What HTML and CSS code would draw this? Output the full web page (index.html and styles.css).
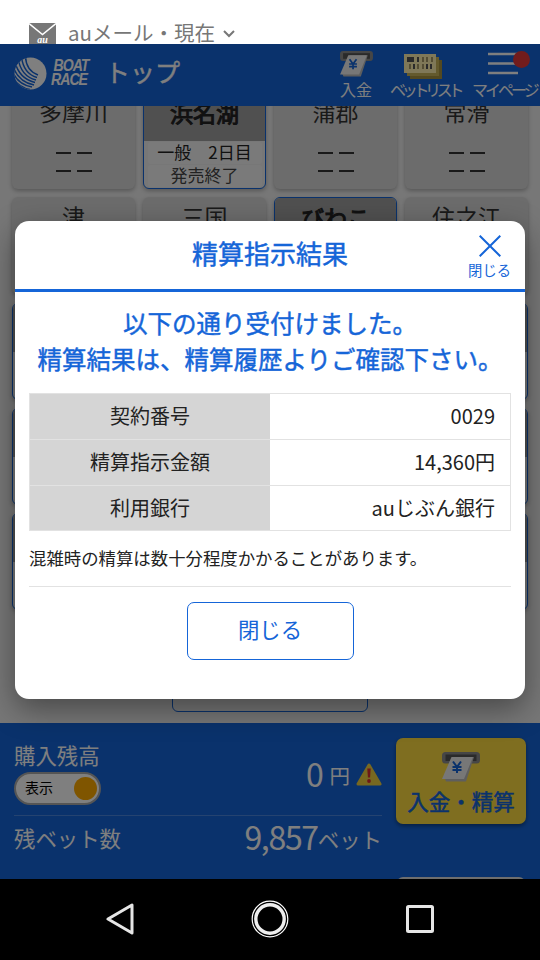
FILE: index.html
```html
<!DOCTYPE html>
<html lang="ja">
<head>
<meta charset="utf-8">
<title>精算指示結果</title>
<link rel="stylesheet" href="styles.css">
</head>
<body>
<svg class="defs" width="0" height="0" aria-hidden="true">
  <symbol id="atm" viewBox="0 0 38 30">
    <rect x="0" y="0" width="38" height="11.500" rx="3.500" fill="#8c8c8c"/>
    <rect x="3.500" y="2.500" width="31" height="6.500" fill="#555"/>
    <path d="M11 5H32L24 29.500H4L3 27Z" fill="#bdbdbd"/>
    <path d="M9.500 5H31L22 27H0Z" fill="#eee"/>
    <path d="M11 9.500L15 15L19 9.500M15 15V21M10.500 15H19.500M10.500 18H19.500" fill="none" stroke="#1565d8" stroke-width="2"/>
  </symbol>
</svg>
<div class="status">
  <svg class="mail" width="27" height="21" viewBox="0 0 27 21">
    <path d="M0 0H27V21H0Z" fill="#777"/>
    <path d="M0 .500L13.500 11.500L27 .500" fill="none" stroke="#fff" stroke-width="1.500"/>
    <text x="13.500" y="19.500" text-anchor="middle" class="mail-au">au</text>
  </svg>
  <span>auメール・現在</span>
  <svg class="chev" width="12" height="8" viewBox="0 0 12 8"><path d="M1 1L6 6L11 1" fill="none" stroke="#777" stroke-width="2"/></svg>
</div>
<div class="app">
  <header class="header">
    <div class="brand">
      <svg width="33" height="33" viewBox="0 0 33 33">
        <defs><clipPath id="disc"><circle cx="16.500" cy="16.500" r="16"/></clipPath></defs>
        <g clip-path="url(#disc)">
          <path d="M0 0H33V33H0Z" fill="#fff"/>
          <g fill="none" stroke="#1565d8" stroke-width="1.500">
            <path d="M11.500 0C12 9 16 15 24 18"/>
            <path d="M7.500 0C9 12 14 18 23 20.500"/>
            <path d="M4 1C6 14 12 20.500 22 23"/>
            <path d="M1 5C4 17 11 23 21 25.500"/>
            <path d="M-1 10C3 20 10 26 20 28"/>
            <path d="M-1 16C3 24 9 28.500 18 30"/>
            <path d="M-1 21C3 27 8 31 16 32.500"/>
          </g>
        </g>
      </svg>
      <span class="brand-name"><span>BOAT</span><span>RACE</span></span>
    </div>
    <h1 class="page-title">トップ</h1>
    <nav class="tools">
      <a class="tool tool-pay"><svg width="33" height="26"><use href="#atm"/></svg><span>入金</span></a>
      <a class="tool tool-bets">
        <svg width="38" height="26" viewBox="0 0 38 26">
          <path d="M6 6H38V25H6Z" fill="#a69340"/><path d="M3 3H35V22H3Z" fill="#c9b45a"/><path d="M0 0H32V19H0Z" fill="#fff0b0"/>
          <path d="M3 3H10V8H3ZM13 3H15V8H13ZM9 10H11V15H9ZM22 10H24V15H22ZM26 10H28V15H26Z" fill="#555"/>
          <path d="M18 3H20V8H18ZM22 3H24V8H22ZM27 3H29V8H27ZM5 10H7V15H5ZM13 10H15V15H13ZM18 10H20V15H18Z" fill="#a89a68"/>
        </svg><span>ベットリスト</span></a>
      <a class="tool tool-my">
        <svg width="42" height="26" viewBox="0 0 42 26">
          <path d="M0 3H30M0 12.500H30M0 22H30" stroke="#fff" stroke-width="2.300"/><circle cx="33.500" cy="8.500" r="8.500" fill="#e43838"/>
        </svg><span>マイページ</span></a>
    </nav>
  </header>
  <main class="races">
    <div class="grid">
      <div class="card"><b>多摩川</b><i></i><i></i></div>
      <div class="card open"><b>浜名湖</b><span class="day">一般　2日目</span><span class="day end">発売終了</span></div>
      <div class="card"><b>蒲郡</b><i></i><i></i></div>
      <div class="card"><b>常滑</b><i></i><i></i></div>
      <div class="card"><b>津</b></div>
      <div class="card"><b>三国</b></div>
      <div class="card open"><b>びわこ</b></div>
      <div class="card"><b>住之江</b></div>
      <div class="card open"><b></b></div><div class="card"></div><div class="card"></div><div class="card open"><b></b></div>
      <div class="card open"><b></b></div><div class="card"></div><div class="card"></div><div class="card open"><b></b></div>
      <div class="card open"><b></b></div><div class="card"></div><div class="card"></div><div class="card open"><b></b></div>
    </div>
    <div class="more"></div>
  </main>
  <section class="wallet">
    <div class="balances">
      <div class="balance">
        <div><div class="label">購入残高</div><div class="switch"><span>表示</span><em></em></div></div>
        <div class="amount"><span class="num">0</span><span class="yen">円</span>
          <svg width="26" height="23" viewBox="0 0 26 23"><path d="M13 2L24 21H2Z" fill="#f0d040" stroke="#f0d040" stroke-width="3" stroke-linejoin="round"/><path d="M11.300 5.500H14.700L14.100 14.500H11.900Z" fill="#d83030"/><circle cx="13" cy="18" r="1.900" fill="#d83030"/></svg>
        </div>
      </div>
      <div class="bets"><span class="label">残ベット数</span><span class="amount"><span class="num">9,857</span><span class="unit">ベット</span></span></div>
    </div>
    <div class="actions">
      <div class="deposit"><svg width="38" height="30"><use href="#atm"/></svg><span>入金・精算</span></div>
      <div class="next"></div>
    </div>
  </section>
  <div class="overlay">
    <div class="modal">
      <div class="modal-head">
        <h2>精算指示結果</h2>
        <div class="close"><svg width="22" height="22" viewBox="0 0 22 22"><path d="M.700 .700L21.300 21.300M21.300 .700L.700 21.300" stroke="#1565d8" stroke-width="2"/></svg><span>閉じる</span></div>
      </div>
      <p class="message">以下の通り受付けました。<br>精算結果は、精算履歴よりご確認下さい。</p>
      <dl class="result">
        <dt>契約番号</dt><dd>0029</dd>
        <dt>精算指示金額</dt><dd>14,360円</dd>
        <dt>利用銀行</dt><dd>auじぶん銀行</dd>
      </dl>
      <p class="note">混雑時の精算は数十分程度かかることがあります。</p>
      <div class="foot"><button class="btn">閉じる</button></div>
    </div>
  </div>
</div>
<div class="navbar">
  <svg width="28" height="34" viewBox="0 0 28 34"><path d="M2 17L26 3V31Z" fill="none" stroke="#e6e6e6" stroke-width="3" stroke-linejoin="round"/></svg>
  <svg width="38" height="38" viewBox="0 0 38 38"><circle cx="19" cy="19" r="17.800" fill="none" stroke="#fff" stroke-width="1.200"/><circle cx="19" cy="19" r="14.200" fill="none" stroke="#eee" stroke-width="3.400"/></svg>
  <svg width="28" height="28" viewBox="0 0 28 28"><rect x="1.500" y="1.500" width="25" height="25" rx="1" fill="none" stroke="#e6e6e6" stroke-width="3"/></svg>
</div>
</body>
</html>
```
FILE: styles.css
```css
* { box-sizing: border-box; margin: 0; padding: 0; }
body {
  width: 540px; height: 960px; overflow: hidden;
  display: flex; flex-direction: column;
  background: #fff; color: #222;
  font-family: "Noto Sans CJK JP", sans-serif;
}
svg { display: block; flex: none; }
.defs { position: absolute; }

.status { height: 44px; flex: none; display: flex; align-items: flex-end; padding-left: 29px; color: #777; font-size: 20.500px; line-height: 23px; white-space: nowrap; }
.mail { margin-right: 12px; }
.mail-au { font: italic bold 10px "Liberation Serif", serif; fill: #fff; }
.chev { margin: 0 0 6px 8px; }

.app { height: 835px; flex: none; position: relative; overflow: hidden; display: flex; flex-direction: column; background: #eee; }
.header { height: 62px; flex: none; display: flex; background: #1565d8; color: #fff; padding-left: 14px; }
.brand { display: flex; gap: 4px; padding-top: 13px; width: 91px; }
.brand-name { display: flex; flex-direction: column; font: italic bold 17px/14px "Liberation Sans", sans-serif; letter-spacing: -1.200px; padding-top: 2px; transform: scaleX(.83); transform-origin: left; }
.brand-name span:first-child { padding-left: 3px; }
.page-title { font-size: 25px; font-weight: 400; line-height: 30px; padding-top: 12px; width: 235px; -webkit-text-stroke: .400px #fff; }
.tools { display: flex; }
.tool { display: flex; flex-direction: column; font-size: 16px; line-height: 20px; white-space: nowrap; padding-top: 7px; }
.tool svg { margin-bottom: 2px; }
.tool-pay { width: 50px; }
.tool-bets { width: 82px; letter-spacing: -4.300px; }
.tool-bets svg { margin: 3px 0 -1px 14px; }
.tool-my { width: 68px; letter-spacing: -3px; }
.tool-my svg { margin-left: 16px; }

.races { height: 617px; flex: none; padding: 0 12px; overflow: hidden; }
.grid { display: grid; grid-template-columns: repeat(4, 123px); grid-auto-rows: 97px; gap: 8.300px 8px; margin-top: -14px; }
.card { border-radius: 6px; background: #d9d9d9; box-shadow: 0 2px 4px #0004; display: flex; flex-direction: column; align-items: center; overflow: hidden; color: #333; }
.card b { font-size: 23px; line-height: 38px; height: 53px; font-weight: 400; }
.card i { width: 36px; height: 2px; margin-bottom: 16px; background: linear-gradient(90deg, #333 15px, transparent 15px 21px, #333 21px); }
.card i:first-of-type { margin-top: 7px; }
.card.open { border: 1.500px solid #1565d8; background: #eee; color: #222; }
.card.open b { width: 100%; flex: none; height: 48px; background: #a0a0a0; text-align: center; line-height: 38px; -webkit-text-stroke: 1px #222; }
.day { width: 114px; height: 22px; flex: none; margin-top: 1px; border-radius: 3px; background: #f5f5f5; text-align: center; font-size: 17px; line-height: 20px; }
.end { color: #444; line-height: 19px; }
.more { width: 196px; height: 60px; margin: 42px auto 0; border: 1.500px solid #1565d8; border-radius: 6px; }

.wallet { height: 156px; flex: none; background: #1565d8; color: #fff; display: flex; justify-content: space-between; padding: 15px 14px 0 14px; }
.balances { width: 368px; }
.balance { height: 78px; border-bottom: 1px solid #4b87e0; display: flex; justify-content: space-between; }
.label { font-size: 21.400px; line-height: 34px; }
.switch { width: 87px; height: 33px; border: 2px solid #aaa; border-radius: 17px; background: #fff; color: #000; display: flex; justify-content: space-between; align-items: center; padding: 0 2px 0 9px; font-size: 14px; line-height: 18px; }
.switch span { padding-bottom: 3px; }
.switch em { width: 23px; height: 23px; border-radius: 50%; background: #ffaa00; }
.amount { display: flex; white-space: nowrap; }
.balance .amount { align-items: center; padding-bottom: 4px; }
.balance .num { padding-bottom: 3px; }
.num { font-size: 32px; letter-spacing: -1.300px; line-height: 42px; }
.yen { font-size: 20.500px; margin: 1px 6px 0 7px; line-height: 30px; }
.bets { display: flex; justify-content: space-between; }
.bets .label { line-height: 43px; }
.bets .num { line-height: 40px; }
.unit { font-size: 21.400px; line-height: 46px; }
.actions { width: 130px; }
.deposit { height: 86px; border-radius: 7px; background: #ffdc40; color: #1565d8; box-shadow: 0 2px 4px #0006; display: flex; flex-direction: column; align-items: center; padding-top: 14px; font-size: 21.500px; line-height: 38px; -webkit-text-stroke: .500px #1565d8; }
.next { height: 50px; margin: 53px 1px 0; border-radius: 6px; background: #ddd; }

.overlay { position: absolute; inset: 0; background: rgba(0, 0, 0, .5); padding: 177px 15px 0; }
.modal { height: 478px; border-radius: 14px; background: #fff; box-shadow: 0 10px 30px rgba(0, 0, 0, .4); overflow: hidden; }
.modal-head { height: 71px; border-bottom: 3px solid #1565d8; display: flex; justify-content: center; color: #1565d8; position: relative; }
.modal-head h2 { font-size: 26px; line-height: 63px; font-weight: 400; -webkit-text-stroke: .500px #1565d8; }
.close { position: absolute; right: 14px; top: 14px; display: flex; flex-direction: column; align-items: center; font-size: 14.300px; line-height: 25px; }
.message { text-align: center; white-space: nowrap; font-size: 24.500px; line-height: 36px; color: #1565d8; padding-top: 13px; -webkit-text-stroke: .450px #1565d8; }
.result { margin: 16px 14px 0; display: grid; grid-template-columns: 240px 1fr; grid-template-rows: 46px 46px 44px; border: 1px solid #e2e2e2; font-size: 20px; line-height: 43px; text-align: center; }
.result dt { background: #d5d5d5; }
.result dd { text-align: right; padding-right: 15px; }
.result dt:not(:last-of-type), .result dd:not(:last-of-type) { border-bottom: 1px solid #e2e2e2; }
.note { margin: 0 14px; height: 56px; border-bottom: 1px solid #e2e2e2; font-size: 17.400px; line-height: 54px; white-space: nowrap; }
.foot { display: flex; justify-content: center; padding-top: 15px; }
.btn { width: 167px; height: 58px; background: #fff; border: 1.500px solid #1565d8; border-radius: 7px; color: #1565d8; padding-bottom: 4px; font: 21.400px/50px "Noto Sans CJK JP", sans-serif; }

.navbar { height: 81px; flex: none; background: #000; display: flex; align-items: center; justify-content: space-between; padding: 0 106px 1px; }
```
